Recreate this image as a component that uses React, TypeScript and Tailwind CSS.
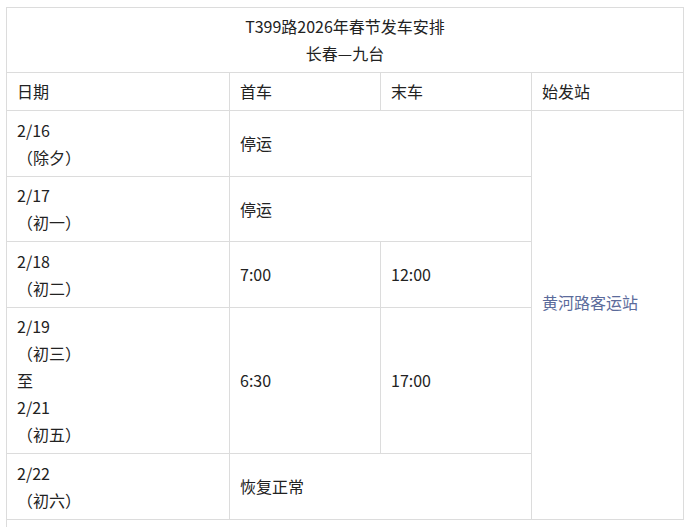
import React from "react";

const cell = "border border-[#dcdcdc] px-[10px] py-[5px] align-middle text-left";

export default function App() {
  return (
    <div
      className="w-[690px] h-[527px] overflow-hidden bg-white pl-[6px] pt-[7px] text-[16px] leading-[27px] text-[#222]"
      style={{ fontFamily: '"Noto Sans CJK SC", "Noto Sans", sans-serif' }}
    >
      <table className="table-fixed border-collapse w-[677px]">
        <colgroup>
          <col className="w-[223px]" />
          <col className="w-[151px]" />
          <col className="w-[151px]" />
          <col className="w-[152px]" />
        </colgroup>
        <tbody>
          <tr className="h-[65px]">
            <td colSpan={4} className={cell + " !text-center"}>
              T399路2026年春节发车安排
              <br />
              长春—九台
            </td>
          </tr>
          <tr className="h-[38px]">
            <td className={cell}>日期</td>
            <td className={cell}>首车</td>
            <td className={cell}>末车</td>
            <td className={cell}>始发站</td>
          </tr>
          <tr className="h-[66px]">
            <td className={cell}>
              2/16
              <br />
              （除夕）
            </td>
            <td colSpan={2} className={cell}>停运</td>
            <td rowSpan={6} className={cell + " text-[#5b6b9b] !pb-[30px]"}>黄河路客运站</td>
          </tr>
          <tr className="h-[65px]">
            <td className={cell}>
              2/17
              <br />
              （初一）
            </td>
            <td colSpan={2} className={cell}>停运</td>
          </tr>
          <tr className="h-[66px]">
            <td className={cell}>
              2/18
              <br />
              （初二）
            </td>
            <td className={cell}>7:00</td>
            <td className={cell}>12:00</td>
          </tr>
          <tr className="h-[146px]">
            <td className={cell}>
              2/19
              <br />
              （初三）
              <br />
              至
              <br />
              2/21
              <br />
              （初五）
            </td>
            <td className={cell}>6:30</td>
            <td className={cell}>17:00</td>
          </tr>
          <tr className="h-[66px]">
            <td className={cell}>
              2/22
              <br />
              （初六）
            </td>
            <td colSpan={2} className={cell}>恢复正常</td>
          </tr>
        </tbody>
      </table>
      <div className="h-[40px] w-[20px] border-l border-[#dcdcdc]" />
    </div>
  );
}
